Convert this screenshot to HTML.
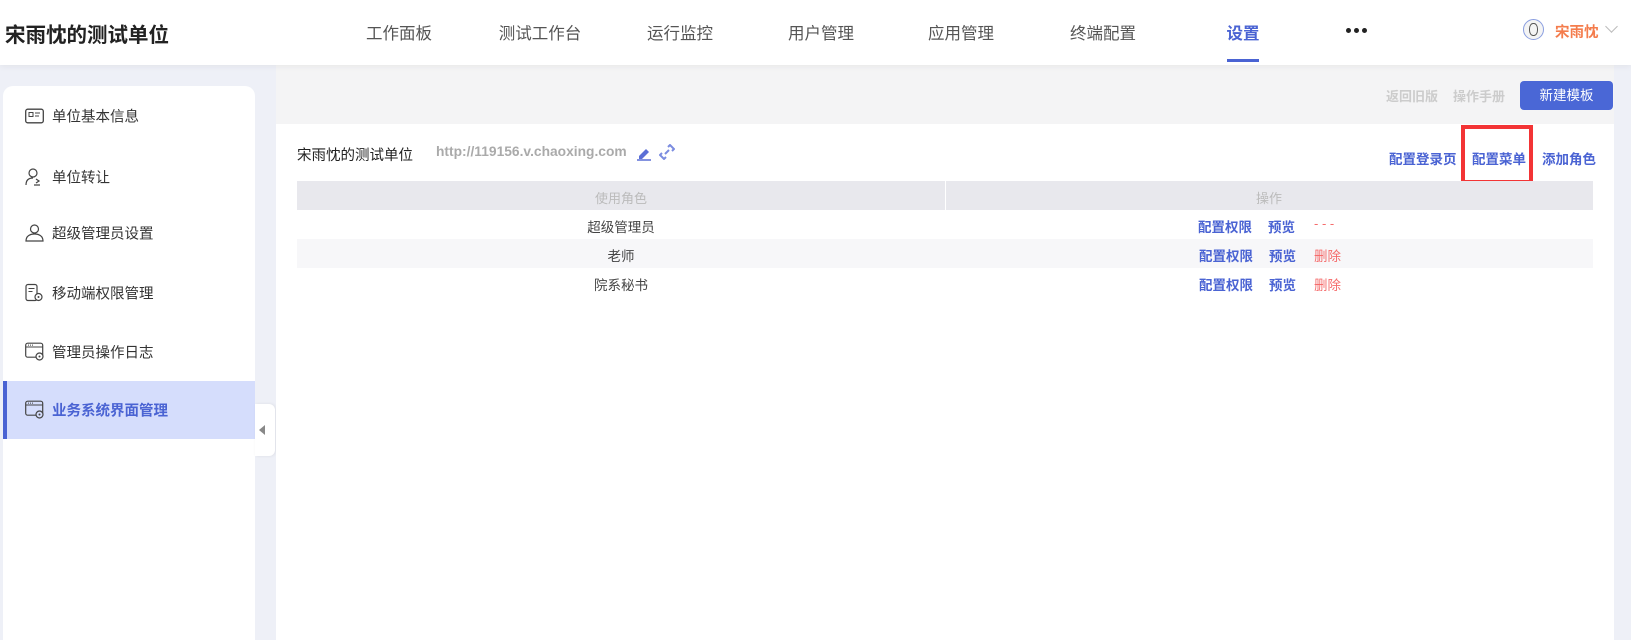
<!DOCTYPE html>
<html><head><meta charset="utf-8"><style>
*{margin:0;padding:0;box-sizing:border-box}
html{width:1631px;height:640px;overflow:hidden}
body{width:1631px;height:640px;overflow:hidden;background:#eef0f7;font-family:"Liberation Sans","Noto Sans CJK SC",sans-serif;position:relative;color:#333}
.a{position:absolute;white-space:nowrap}
.hdr{left:0;top:0;width:1631px;height:65px;background:#fff;box-shadow:0 2px 6px rgba(0,0,0,.05);z-index:2}
.nav{font-size:16.5px;color:#555;top:20px;transform:translateX(-50%)}
.side{left:3px;top:86px;width:252px;height:554px;background:#fff;border-radius:10px 10px 0 0}
.mi{left:52px;font-size:14.5px;color:#333;transform:translateY(-50%)}
.ic{left:25px;transform:translateY(-50%)}
.op{font-size:13.5px;color:#4a63d3;font-weight:bold}
</style></head><body>
<div class="a hdr">
 <div class="a" style="left:5px;top:18px;font-size:20.5px;font-weight:bold;color:#222">宋雨忱的测试单位</div>
 <div class="a nav" style="left:399px">工作面板</div>
 <div class="a nav" style="left:540px">测试工作台</div>
 <div class="a nav" style="left:680px">运行监控</div>
 <div class="a nav" style="left:821px">用户管理</div>
 <div class="a nav" style="left:961px">应用管理</div>
 <div class="a nav" style="left:1103px">终端配置</div>
 <div class="a nav" style="left:1243px;color:#4a63d3;font-weight:bold">设置</div>
 <div class="a" style="left:1227px;top:59px;width:32px;height:3px;background:#4a63d3"></div>
 <div class="a" style="left:1346px;top:28px;width:5px;height:5px;border-radius:50%;background:#222;box-shadow:8px 0 0 #222,16px 0 0 #222"></div>
 <div class="a" style="left:1523px;top:19px;width:21px;height:21px;border-radius:50%;border:1.5px solid #8a9ee0;background:#f4f4f4"><div style="margin:3px auto;width:9px;height:13px;border:1.5px solid #555;border-radius:45%"></div></div>
 <div class="a" style="left:1555px;top:21px;font-size:14.5px;font-weight:bold;color:#f47c4c">宋雨忱</div>
 <div class="a" style="left:1607px;top:22px;width:9px;height:9px;border-right:1.5px solid #bbb;border-bottom:1.5px solid #bbb;transform:rotate(45deg)"></div>
</div>
<div class="a side"></div>
<svg class="a ic" style="top:116px" width="19" height="15" viewBox="0 0 19 15"><rect x=".7" y=".7" width="17.6" height="13.6" rx="2" fill="none" stroke="#444" stroke-width="1.3"/><rect x="4" y="4" width="4" height="4" fill="none" stroke="#444"/><path d="M10 4.5h5M10 7.5h4" stroke="#444"/></svg>
<div class="a mi" style="top:116px">单位基本信息</div>
<svg class="a ic" style="top:177px" width="19" height="18" viewBox="0 0 19 18"><circle cx="8" cy="5" r="4" fill="none" stroke="#444" stroke-width="1.2"/><path d="M1 17c0-5 3-7 7-7M11 11l3 2-3 2M9 17h6" fill="none" stroke="#444" stroke-width="1.2"/></svg>
<div class="a mi" style="top:177px">单位转让</div>
<svg class="a ic" style="top:233px" width="19" height="18" viewBox="0 0 19 18"><circle cx="9.5" cy="5" r="4" fill="none" stroke="#444" stroke-width="1.2"/><path d="M1 17c0-5 4-7 8.5-7s8.5 2 8.5 7z" fill="none" stroke="#444" stroke-width="1.2"/></svg>
<div class="a mi" style="top:233px">超级管理员设置</div>
<svg class="a ic" style="top:293px" width="19" height="19" viewBox="0 0 19 19"><rect x="1" y="1" width="11" height="16" rx="2" fill="none" stroke="#444" stroke-width="1.2"/><path d="M3.5 5h6M3.5 8h4" stroke="#444"/><circle cx="13.5" cy="13.5" r="3.5" fill="#fff" stroke="#444" stroke-width="1.2"/><circle cx="13.5" cy="13.5" r="1" fill="#444"/></svg>
<div class="a mi" style="top:293px">移动端权限管理</div>
<svg class="a ic" style="top:352px" width="20" height="19" viewBox="0 0 20 19"><rect x=".7" y=".7" width="17" height="14" rx="2" fill="none" stroke="#444" stroke-width="1.2"/><path d="M1 4.5h17" stroke="#444"/><path d="M3 2.6h1M5 2.6h1M7 2.6h1" stroke="#444"/><circle cx="14.5" cy="14" r="3.5" fill="#fff" stroke="#444" stroke-width="1.2"/><circle cx="14.5" cy="14" r="1" fill="#444"/></svg>
<div class="a mi" style="top:352px">管理员操作日志</div>
<div class="a" style="left:3px;top:381px;width:252px;height:58px;background:#d5ddfc;border-left:4px solid #4a63d3"></div>
<svg class="a ic" style="top:410px" width="20" height="19" viewBox="0 0 20 19"><rect x=".7" y=".7" width="17" height="14" rx="2" fill="none" stroke="#444" stroke-width="1.2"/><path d="M1 4.5h17" stroke="#444"/><path d="M3 2.6h1M5 2.6h1M7 2.6h1" stroke="#444"/><circle cx="14.5" cy="14" r="3.5" fill="#d5ddfc" stroke="#444" stroke-width="1.2"/><circle cx="14.5" cy="14" r="1" fill="#444"/></svg>
<div class="a mi" style="top:410px;color:#4a63d3;font-weight:bold">业务系统界面管理</div>
<div class="a" style="left:255px;top:404px;width:20px;height:52px;background:#fff;border-radius:0 6px 6px 0;box-shadow:1px 0 3px rgba(0,0,0,.08)"><div style="position:absolute;left:4px;top:21px;border-right:6px solid #888;border-top:5px solid transparent;border-bottom:5px solid transparent"></div></div>
<div class="a" style="left:276px;top:65px;width:1338px;height:59px;background:#f4f4f5"></div>
<div class="a" style="left:1386px;top:86px;font-size:13px;color:#ccc;font-weight:bold">返回旧版</div>
<div class="a" style="left:1453px;top:86px;font-size:13px;color:#ccc;font-weight:bold">操作手册</div>
<div class="a" style="left:1520px;top:81px;width:93px;height:29px;background:#4a67d6;border-radius:4px;color:#fff;font-size:13.5px;text-align:center;line-height:29px">新建模板</div>
<div class="a" style="left:276px;top:124px;width:1338px;height:516px;background:#fff"></div>
<div class="a" style="left:297px;top:144px;font-size:14.5px;color:#222">宋雨忱的测试单位</div>
<div class="a" style="left:436px;top:144px;font-size:13.8px;color:#aaa;font-weight:bold">http://119156.v.chaoxing.com</div>
<svg class="a" style="left:636px;top:145px" width="16" height="16" viewBox="0 0 16 16"><path d="M3 11l7-7 3 3-7 7H3z" fill="#5b6fd6"/><path d="M1 15h14" stroke="#5b6fd6" stroke-width="1.5"/></svg>
<svg class="a" style="left:659px;top:144px" width="16" height="16" viewBox="0 0 16 16"><path d="M9 3l2-2 4 4-2 2M7 13l-2 2-4-4 2-2M6 10l4-4" fill="none" stroke="#7b8ce0" stroke-width="2"/></svg>
<div class="a op" style="left:1389px;top:148px">配置登录页</div>
<div class="a op" style="left:1472px;top:148px">配置菜单</div>
<div class="a op" style="left:1542px;top:148px">添加角色</div>
<div class="a" style="left:1461px;top:125px;width:72px;height:59px;border:4px solid #f33435"></div>
<div class="a" style="left:297px;top:181px;width:1296px;height:29px;background:#e8e8ed"></div>
<div class="a" style="left:945px;top:181px;width:1px;height:29px;background:#fff"></div>
<div class="a" style="left:297px;top:239px;width:1296px;height:29px;background:#f7f7f9"></div>
<div class="a" style="left:621px;top:188px;transform:translateX(-50%);font-size:13px;color:#bbb">使用角色</div>
<div class="a" style="left:1269px;top:188px;transform:translateX(-50%);font-size:13px;color:#bbb">操作</div>
<div class="a" style="left:621px;top:216px;transform:translateX(-50%);font-size:13.5px;color:#444">超级管理员</div>
<div class="a" style="left:621px;top:245px;transform:translateX(-50%);font-size:13.5px;color:#444">老师</div>
<div class="a" style="left:621px;top:274px;transform:translateX(-50%);font-size:13.5px;color:#444">院系秘书</div>
<div class="a op" style="left:1198px;top:216px">配置权限</div><div class="a op" style="left:1268px;top:216px">预览</div><div class="a" style="left:1314px;top:216px;font-size:13px;color:#f56c6c">- - -</div>
<div class="a op" style="left:1199px;top:245px">配置权限</div><div class="a op" style="left:1269px;top:245px">预览</div><div class="a" style="left:1314px;top:245px;font-size:13.5px;color:#f56c6c">删除</div>
<div class="a op" style="left:1199px;top:274px">配置权限</div><div class="a op" style="left:1269px;top:274px">预览</div><div class="a" style="left:1314px;top:274px;font-size:13.5px;color:#f56c6c">删除</div>
</body></html>
